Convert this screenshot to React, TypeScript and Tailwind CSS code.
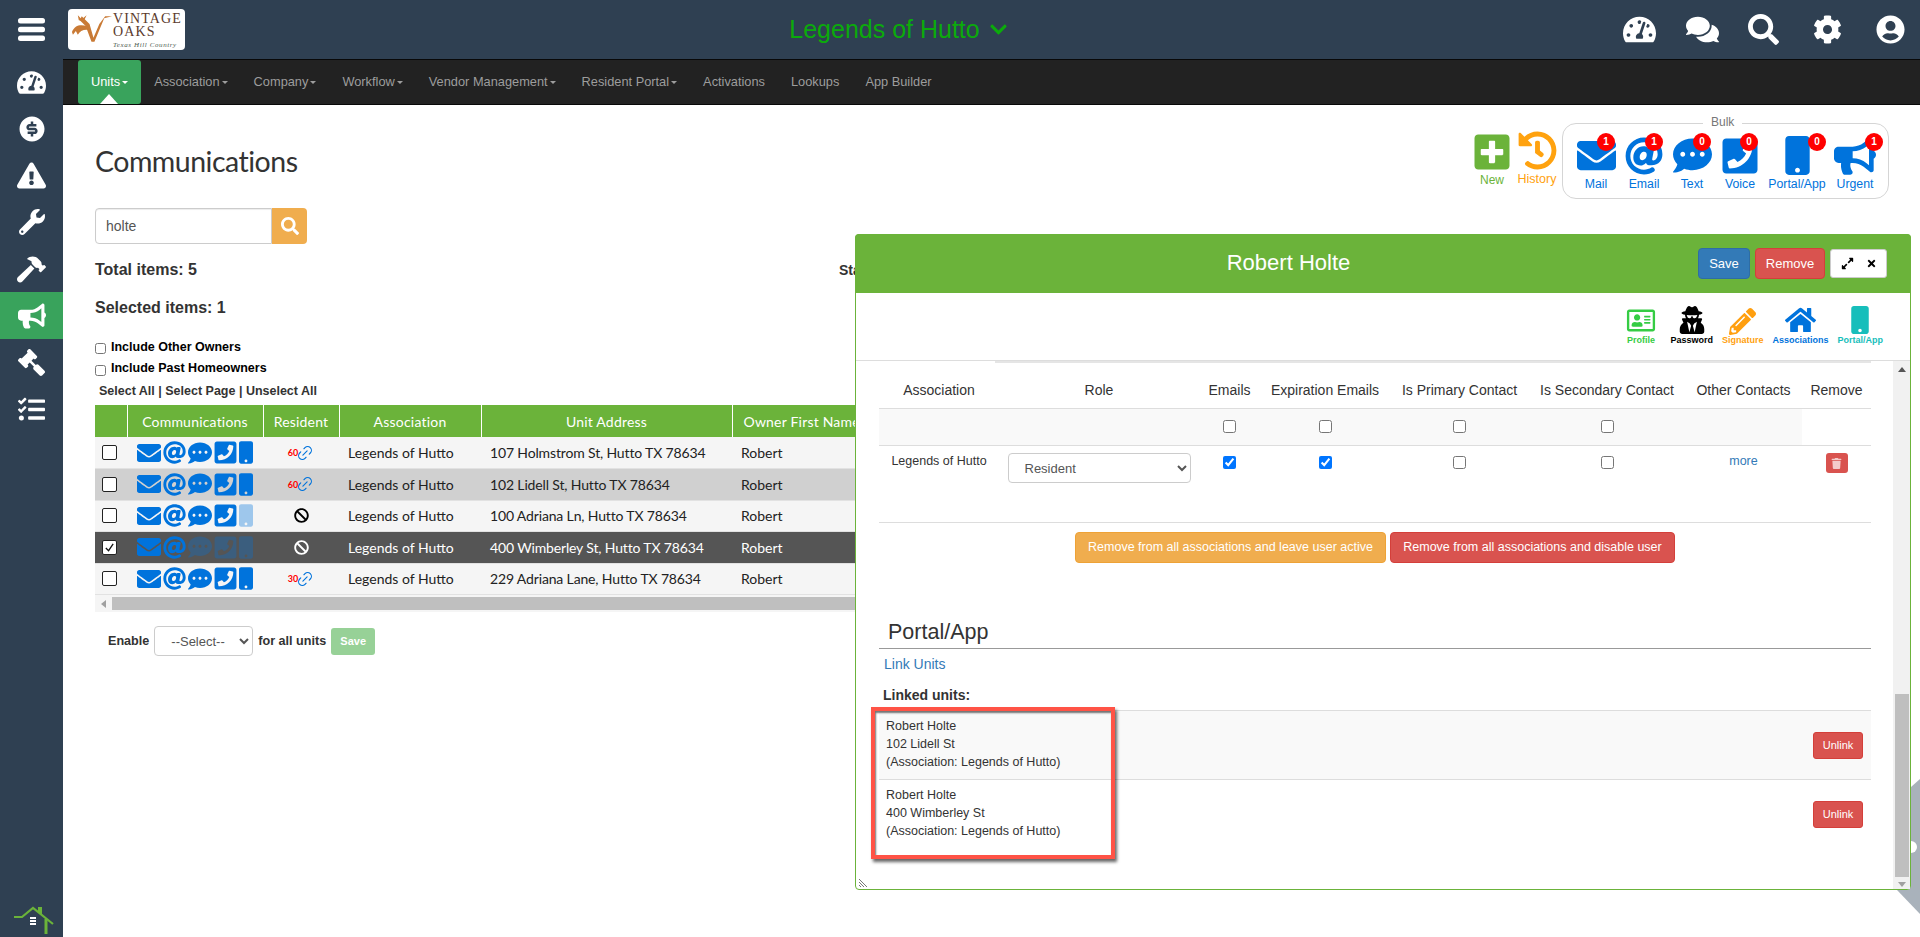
import React from "react";
import {
  FaAt,
  FaBan,
  FaBullhorn,
  FaChevronDown,
  FaCog,
  FaCommentDots,
  FaComments,
  FaEnvelope,
  FaExclamationTriangle,
  FaExpandAlt,
  FaGavel,
  FaHammer,
  FaHistory,
  FaHome,
  FaMobile,
  FaPencilAlt,
  FaPhoneSquare,
  FaPlusSquare,
  FaRegAddressCard,
  FaSearch,
  FaTachometerAlt,
  FaTasks,
  FaTimes,
  FaTrash,
  FaUserCircle,
  FaUserSecret,
  FaWrench,
} from "react-icons/fa";
import { RiMoneyDollarCircleFill } from "react-icons/ri";
import { Link2 } from "lucide-react";

const navItems = [
  { label: "Units", caret: true, active: true },
  { label: "Association", caret: true },
  { label: "Company", caret: true },
  { label: "Workflow", caret: true },
  { label: "Vendor Management", caret: true },
  { label: "Resident Portal", caret: true },
  { label: "Activations" },
  { label: "Lookups" },
  { label: "App Builder" },
];

const bulkItems = [
  { label: "Mail", count: 1, icon: <FaEnvelope size={39} />, box: "w-[48px]", badge: "left-[25px]" },
  { label: "Email", count: 1, icon: <FaAt size={38} />, box: "w-[48px]", badge: "left-[25px]" },
  { label: "Text", count: 0, icon: <FaCommentDots size={39} />, box: "w-[48px]", badge: "left-[25px]" },
  { label: "Voice", count: 0, icon: <FaPhoneSquare size={40} />, box: "w-[48px]", badge: "left-[24px]" },
  { label: "Portal/App", count: 0, icon: <FaMobile size={39} />, box: "w-[66px]", badge: "left-[44px]" },
  { label: "Urgent", count: 1, icon: <FaBullhorn size={42} />, box: "w-[50px]", badge: "left-[35px]" },
];

const rows = [
  { address: "107 Holmstrom St, Hutto TX 78634", resident: "60", tone: "light" },
  { address: "102 Lidell St, Hutto TX 78634", resident: "60", tone: "gray" },
  { address: "100 Adriana Ln, Hutto TX 78634", resident: "", tone: "light", mobile: "faded" },
  { address: "400 Wimberley St, Hutto TX 78634", resident: "", tone: "dark", checked: true },
  { address: "229 Adriana Lane, Hutto TX 78634", resident: "30", tone: "light" },
];

const linkedUnits = [
  { name: "Robert Holte", street: "102 Lidell St", shaded: true },
  { name: "Robert Holte", street: "400 Wimberley St", shaded: false },
];

const roleCols = [
  { label: "Association", width: "w-[120px]" },
  { label: "Role", width: "w-[200px]" },
  { label: "Emails", width: "w-[61px]" },
  { label: "Expiration Emails", width: "w-[130px]" },
  { label: "Is Primary Contact", width: "w-[139px]" },
  { label: "Is Secondary Contact", width: "w-[156px]" },
  { label: "Other Contacts", width: "w-[117px]" },
  { label: "Remove", width: "w-[69px]" },
];

function Logo() {
  return (
    <div className="flex h-[41px] w-[117px] overflow-hidden rounded-[4px] bg-white pl-[2px]">
      <svg viewBox="0 0 44 30" className="mt-[3px] h-[30px] w-[43px] shrink-0">
        <path d="M12 4 L20 12 L24 26 L30 12 L36 4 L43 4 L35 6 L25 30 L22 30 L16 14 L10 8 Z" fill="#c97a35" />
        <path d="M2 20 C5 13 10 12 18 14 L20 18 C14 17 10 19 8 23 L6 19 L3 23 Z" fill="#c97a35" />
        <path d="M8 3 L12 7 L17 3 L14 9 L9 8 Z" fill="#c97a35" />
      </svg>
      <div className="flex flex-col font-['Liberation_Serif',serif] text-[#5b3a2c]">
        <span className="mt-[3px] text-[14px] leading-[14px] tracking-[1.1px]">VINTAGE</span>
        <span className="text-[14px] leading-[12px] tracking-[1.1px]">OAKS</span>
        <span className="mt-[3px] text-[7px] leading-[9px] italic tracking-[0.6px] text-[#4d5b50]">Texas Hill Country</span>
      </div>
    </div>
  );
}

function RowCheck({ checked }: { checked?: boolean }) {
  return (
    <div className="ml-[7px] flex h-[15px] w-[15px] items-center justify-center rounded-[2px] border border-[#222] bg-white">
      {checked && (
        <svg viewBox="0 0 12 12" className="h-[11px] w-[11px]">
          <path d="M2 6.5 L5 9.5 L10 2" fill="none" stroke="#111" strokeWidth="1.4" />
        </svg>
      )}
    </div>
  );
}

export default function App() {
  return (
    <div className="relative flex h-screen flex-col overflow-hidden bg-white font-['Liberation_Sans',Arial,sans-serif] text-[#333]">
      {/* top bar */}
      <header className="flex h-[59px] shrink-0 items-center bg-[#2f4052]">
        <div className="flex w-[63px] justify-center">
          <svg viewBox="0 0 27 23" className="h-[23px] w-[27px]" fill="#fff">
            <rect width="27" height="5.5" rx="2.5" />
            <rect y="8.7" width="27" height="5.5" rx="2.5" />
            <rect y="17.5" width="27" height="5.5" rx="2.5" />
          </svg>
        </div>
        <div className="ml-[5px] w-[122px]">
          <Logo />
        </div>
        <div className="flex flex-1 items-center justify-center gap-[9px] pr-[16px] text-[25px] text-[#0bab0b]">
          Legends of Hutto
          <FaChevronDown size={19} />
        </div>
        <div className="flex w-[297px] items-center text-white">
          <FaTachometerAlt size={33} className="mr-[30px]" />
          <FaComments size={33} className="mr-[29px]" />
          <FaSearch size={31} className="mr-[34px]" />
          <FaCog size={29} className="mr-[34px]" />
          <FaUserCircle size={29} />
        </div>
      </header>

      <div className="flex min-h-0 flex-1">
        {/* sidebar */}
        <aside className="relative w-[63px] shrink-0 bg-[#2f4052] text-white">
          {[
            <FaTachometerAlt size={29} />,
            <RiMoneyDollarCircleFill size={30} />,
            <FaExclamationTriangle size={29} />,
            <FaWrench size={26} />,
            <FaHammer size={29} />,
            <FaBullhorn size={28} />,
            <FaGavel size={27} className="-scale-x-100" />,
            <FaTasks size={27} />,
          ].map((icon, i) => (
            <div key={i} className={`flex h-[46.7px] items-center justify-center ${i === 5 ? "bg-[#39a35c]" : ""}`}>
              {icon}
            </div>
          ))}
          <svg viewBox="0 0 42 28" className="absolute bottom-[3px] left-[13px] h-[28px] w-[42px]">
            <path d="M1 11 H9 L20 2 L40 18" fill="none" stroke="#6bb33a" strokeWidth="2.2" />
            <path d="M25 1 H29 V9 L25 6 Z" fill="#6bb33a" />
            <path d="M33 13 V28" stroke="#6bb33a" strokeWidth="3" />
            <rect x="17" y="11" width="6" height="2" fill="#fff" />
            <rect x="17" y="14" width="6" height="2" fill="#fff" />
            <rect x="17" y="17" width="6" height="2" fill="#fff" />
          </svg>
        </aside>

        <div className="min-w-0 flex-1">
          {/* menu */}
          <nav className="flex h-[46px] items-stretch border-y border-[#080808] bg-[#222] pl-[15px] text-[12.8px] text-[#9d9d9d]">
            {navItems.map((item) => (
              <div
                key={item.label}
                className={`relative flex items-center px-[13px] ${item.active ? "rounded-[3px] bg-[#39a35c] text-white" : ""}`}
              >
                {item.label}
                {item.caret && (
                  <span className="ml-[2px] mt-[1px] h-0 w-0 border-x-[3px] border-t-[3px] border-x-transparent border-t-current" />
                )}
                {item.active && (
                  <span className="absolute bottom-0 left-[22px] h-0 w-0 border-x-[9px] border-b-[10px] border-x-transparent border-b-white" />
                )}
              </div>
            ))}
          </nav>

          <main className="relative pl-[32px]">
            {/* title row with new, history and bulk actions */}
            <div className="flex items-center justify-between pr-[31px] pt-[18px]">
              <h1 className="font-['Lato',sans-serif] text-[28.5px] leading-[40px] tracking-[-0.5px] text-[#333]">Communications</h1>
              <div className="flex items-start">
                <div className="mt-[9px] flex w-[46px] flex-col items-center text-[12px] leading-[14px] text-[#6bb33a]">
                  <FaPlusSquare size={40} />
                  <span className="mt-[1px]">New</span>
                </div>
                <div className="mt-[8px] flex w-[44px] flex-col items-center text-[12.5px] leading-[14px] text-[#ffa20f]">
                  <FaHistory size={39} />
                  <span className="mt-[2px]">History</span>
                </div>
                <div className="relative ml-[3px] flex h-[76px] w-[327px] items-start rounded-[14px] border border-[#d5d5d5] pl-[9px] pt-[12px]">
                  <span className="absolute left-[140px] top-[-9px] bg-white px-[8px] text-[12px] leading-[14px] text-[#777]">Bulk</span>
                  {bulkItems.map((b) => (
                    <div key={b.label} className={`relative flex ${b.box} flex-col items-center text-[12.3px] leading-[14px] text-[#0073dc]`}>
                      <div className="flex h-[39px] items-center">{b.icon}</div>
                      <span className="mt-[2px] whitespace-nowrap">{b.label}</span>
                      <span className={`absolute ${b.badge} top-[-3px] flex h-[18px] w-[18px] items-center justify-center rounded-full bg-[#ff0000] text-[10px] font-bold text-white`}>
                        {b.count}
                      </span>
                    </div>
                  ))}
                </div>
              </div>
            </div>

            {/* search */}
            <div className="mt-[9px] flex h-[36px] w-[212px]">
              <input
                defaultValue="holte"
                className="h-full w-[177px] rounded-l-[4px] border border-[#ccc] px-[10px] text-[14px] text-[#555] shadow-[inset_0_1px_1px_rgba(0,0,0,0.075)]"
              />
              <button className="flex w-[35px] items-center justify-center rounded-r-[4px] bg-[#f0ad4e] text-white">
                <FaSearch size={18} />
              </button>
            </div>

            <div className="mt-[16px] flex h-[20px] text-[16px] font-bold leading-[20px]">
              <div className="w-[744px]">Total items: 5</div>
              <div className="text-[14px]">Status</div>
            </div>
            <div className="mt-[18px] text-[16px] font-bold leading-[20px]">Selected items: 1</div>

            <label className="mt-[18px] flex h-[22px] items-center gap-[5px] text-[12.5px] font-bold text-black">
              <input type="checkbox" className="mt-[3px] h-[11px] w-[11px]" />
              Include Other Owners
            </label>
            <label className="flex h-[21px] items-center gap-[5px] text-[12.5px] font-bold text-black">
              <input type="checkbox" className="mt-[3px] h-[11px] w-[11px]" />
              Include Past Homeowners
            </label>
            <div className="mt-[2px] pl-[4px] text-[12.5px] font-bold leading-[20px]">
              Select All | Select Page | Unselect All
            </div>

            {/* units table */}
            <div className="mt-[4px] w-[790px] overflow-hidden">
              <table className="w-[790px] table-fixed border-collapse font-['Lato',sans-serif] text-[14px]">
                <colgroup>
                  <col className="w-[32px]" />
                  <col className="w-[136px]" />
                  <col className="w-[76px]" />
                  <col className="w-[142px]" />
                  <col className="w-[251px]" />
                  <col />
                </colgroup>
                <thead>
                  <tr className="h-[32px] bg-[#6bb33a] text-white">
                    {["", "Communications", "Resident", "Association", "Unit Address"].map((h, i) => (
                      <th key={i} className="whitespace-nowrap border-r border-white text-center text-[14px] font-normal tracking-[0.2px]">
                        {h}
                      </th>
                    ))}
                    <th className="whitespace-nowrap pl-[11px] text-left text-[14px] font-normal tracking-[0.2px]">Owner First Name</th>
                  </tr>
                </thead>
                <tbody>
                  {rows.map((r) => {
                    const isDark = r.tone === "dark";
                    const dim = isDark ? "opacity-30" : "";
                    return (
                      <tr
                        key={r.address}
                        className={`h-[31.5px] border-b border-[#e2e2e2] ${
                          isDark ? "bg-[#555] text-white" : r.tone === "gray" ? "bg-[#d0d0d0] text-[#222]" : "bg-[#f5f5f5] text-[#222]"
                        }`}
                      >
                        <td>
                          <RowCheck checked={r.checked} />
                        </td>
                        <td>
                          <div className="flex items-center gap-[2px] pl-[10px] text-[#0073dc]">
                            <FaEnvelope size={24} />
                            <FaAt size={23} />
                            <FaCommentDots size={24} className={dim} />
                            <FaPhoneSquare size={25} className={`-mx-[1px] ${dim}`} />
                            <FaMobile className={`h-[23px] w-[14px] ${dim} ${r.mobile === "faded" ? "opacity-35" : ""}`} />
                          </div>
                        </td>
                        <td>
                          <div className="flex items-center justify-center">
                            {r.resident ? (
                              <>
                                <span className="text-[9px] font-bold text-[#ff0000]">{r.resident}</span>
                                <Link2 size={18} strokeWidth={1.5} className="-ml-[2px] -rotate-45 text-[#0073dc]" />
                              </>
                            ) : (
                              <FaBan size={15} className={isDark ? "text-white" : "text-black"} />
                            )}
                          </div>
                        </td>
                        <td className="pl-[9px] whitespace-nowrap">Legends of Hutto</td>
                        <td className="pl-[9px] whitespace-nowrap tracking-[-0.15px]">{r.address}</td>
                        <td className="pl-[9px]">Robert</td>
                      </tr>
                    );
                  })}
                </tbody>
              </table>
              <div className="flex h-[17px] items-center bg-[#f5f5f5]">
                <span className="ml-[6px] h-0 w-0 border-y-[4px] border-r-[5px] border-y-transparent border-r-[#a0a0a0]" />
                <div className="ml-[6px] h-[13px] flex-1 bg-[#bfbfbf]" />
              </div>
            </div>

            <div className="mt-[14px] flex h-[30px] items-center pl-[13px] text-[12.6px] font-bold">
              Enable
              <select className="mx-[5px] h-[30px] w-[99px] rounded-[4px] border border-[#ccc] bg-white pl-[12px] text-[13px] font-normal text-[#555]">
                <option>--Select--</option>
              </select>
              for all units
              <button className="ml-[5px] h-[27px] w-[44px] rounded-[3px] bg-[#97d197] text-[11px] font-bold text-white">Save</button>
            </div>
          </main>
        </div>
      </div>

      {/* floating widget behind the dialog */}
      <svg viewBox="0 0 23 135" className="absolute left-[1897px] top-[779px] h-[135px] w-[23px]">
        <path d="M0 111 L14 8 L23 0 V135 Z" fill="#a9b2bb" />
        <circle cx="14" cy="68" r="6" fill="#fff" />
      </svg>

      {/* contact dialog */}
      <section className="absolute left-[855px] top-[234px] flex h-[656px] w-[1056px] flex-col rounded-[4px] border border-[#6bb33a] bg-white">
        <div className="-mx-px -mt-px flex h-[59px] shrink-0 items-center rounded-t-[4px] bg-[#6bb33a] pr-[24px]">
          <div className="flex-1 pb-[2px] pl-[24px] text-center text-[22px] text-white">Robert Holte</div>
          <button className="h-[31px] w-[52px] rounded-[4px] border border-[#2e6da4] bg-[#337ab7] text-[13px] text-white">Save</button>
          <button className="ml-[5px] h-[31px] w-[70px] rounded-[4px] border border-[#d43f3a] bg-[#d9534f] text-[13px] text-white">Remove</button>
          <div className="ml-[5px] flex h-[29px] w-[57px] items-center justify-center gap-[12px] rounded-[3px] border border-[#ccc] bg-white text-black">
            <FaExpandAlt size={13} />
            <FaTimes size={11} />
          </div>
        </div>

        <div className="flex h-[68px] shrink-0 items-start justify-end border-b border-[#ddd] pr-[27px] pt-[13px] text-[9px] font-bold leading-[12px]">
          <div className="mr-[15px] flex w-[29px] flex-col items-center text-[#35cc44]">
            <FaRegAddressCard size={30} className="mt-[2px] h-[25px]" />
            <span className="mt-[1px]">Profile</span>
          </div>
          <div className="mr-[9px] flex flex-col items-center text-black">
            <FaUserSecret size={28} />
            <span>Password</span>
          </div>
          <div className="mr-[9px] flex flex-col items-center text-[#ff9f0f]">
            <FaPencilAlt size={27} className="mt-[2px] mb-[-1px]" />
            <span>Signature</span>
          </div>
          <div className="mr-[9px] flex flex-col items-center text-[#0073dc]">
            <FaHome size={31} className="h-[28px]" />
            <span>Associations</span>
          </div>
          <div className="flex flex-col items-center text-[#17bebb]">
            <FaMobile size={28} />
            <span>Portal/App</span>
          </div>
        </div>

        <div className="flex min-h-0 flex-1">
          <div className="min-w-0 flex-1 pl-[23px] pr-[22px] text-[12.5px]">
            <div className="ml-[116px] h-[2px] bg-[#e5e5e5]" />

            <div className="flex h-[46px] items-center border-b border-[#ddd] pt-[10px] text-[14px]">
              {roleCols.map((c) => (
                <div key={c.label} className={`${c.width} whitespace-nowrap text-center`}>
                  {c.label}
                </div>
              ))}
            </div>

            <div className="flex h-[37px] items-center border-b border-[#ddd]">
              <div className="flex h-full w-[923px] items-center bg-[#f9f9f9] pb-[2px] pl-[320px]">
                <div className="flex w-[61px] justify-center"><input type="checkbox" className="h-[13px] w-[13px]" /></div>
                <div className="flex w-[130px] justify-center"><input type="checkbox" className="h-[13px] w-[13px]" /></div>
                <div className="flex w-[139px] justify-center"><input type="checkbox" className="h-[13px] w-[13px]" /></div>
                <div className="flex w-[156px] justify-center"><input type="checkbox" className="h-[13px] w-[13px]" /></div>
              </div>
            </div>

            <div className="flex h-[77px] items-start border-b border-[#ddd] pt-[7px]">
              <div className="w-[120px] text-center leading-[16px]">Legends of Hutto</div>
              <div className="flex w-[200px] justify-center">
                <select defaultValue="Resident" className="h-[30px] w-[183px] rounded-[4px] border border-[#ccc] bg-white pl-[12px] text-[13px] text-[#555]">
                  <option>Resident</option>
                </select>
              </div>
              <div className="flex w-[61px] justify-center pt-[3px]"><input type="checkbox" defaultChecked className="h-[13px] w-[13px]" /></div>
              <div className="flex w-[130px] justify-center pt-[3px]"><input type="checkbox" defaultChecked className="h-[13px] w-[13px]" /></div>
              <div className="flex w-[139px] justify-center pt-[3px]"><input type="checkbox" className="h-[13px] w-[13px]" /></div>
              <div className="flex w-[156px] justify-center pt-[3px]"><input type="checkbox" className="h-[13px] w-[13px]" /></div>
              <div className="w-[117px] text-center leading-[16px] text-[#337ab7]">more</div>
              <div className="flex w-[69px] justify-center">
                <div className="flex h-[20px] w-[22px] items-center justify-center rounded-[3px] bg-[#d9534f] text-white/70">
                  <FaTrash size={11} />
                </div>
              </div>
            </div>

            <div className="mt-[9px] flex justify-center gap-[4px] text-[12.5px] text-white">
              <button className="h-[31px] w-[311px] rounded-[4px] border border-[#eea236] bg-[#f0ad4e]">Remove from all associations and leave user active</button>
              <button className="h-[31px] w-[285px] rounded-[4px] border border-[#d43f3a] bg-[#d9534f]">Remove from all associations and disable user</button>
            </div>

            <h3 className="mt-[54px] border-b border-[#999] pb-px pl-[9px] text-[21.5px] leading-[30px]">Portal/App</h3>
            <a className="mt-[5px] block pl-[5px] text-[14px] leading-[20px] text-[#337ab7]">Link Units</a>
            <div className="mt-[11px] pl-[4px] text-[14px] font-bold leading-[20px]">Linked units:</div>

            <div className="relative mt-[5px]">
              {linkedUnits.map((u) => (
                <div
                  key={u.street}
                  className={`flex h-[69px] items-center justify-between border-t border-[#ddd] pl-[7px] pr-[8px] leading-[18px] ${u.shaded ? "bg-[#f9f9f9]" : ""}`}
                >
                  <div className="pb-[2px]">
                    <div>{u.name}</div>
                    <div>{u.street}</div>
                    <div>(Association: Legends of Hutto)</div>
                  </div>
                  <button className="h-[27px] w-[50px] rounded-[3px] border border-[#d43f3a] bg-[#d9534f] text-[11px] text-white">Unlink</button>
                </div>
              ))}
              {/* red annotation drawn over the linked units */}
              <div className="absolute left-[-8px] top-[-3px] h-[152px] w-[244px] border-4 border-[#ff5346] shadow-[2px_3px_3px_rgba(0,0,0,0.6),inset_1px_2px_2px_rgba(0,0,0,0.55)]" />
            </div>
          </div>

          {/* dialog scrollbar */}
          <div className="flex w-[17px] shrink-0 flex-col items-center bg-[#f1f1f1] pb-[2px] pt-[6px]">
            <span className="h-0 w-0 border-x-[4px] border-b-[5px] border-x-transparent border-b-[#555]" />
            <div className="mt-[322px] w-[14px] flex-1 bg-[#bfbfbf]" />
            <span className="mt-[5px] h-0 w-0 border-x-[4px] border-t-[5px] border-x-transparent border-t-[#a0a0a0]" />
          </div>
        </div>

        {/* resize handle */}
        <svg viewBox="0 0 10 10" className="absolute bottom-[1px] left-[2px] h-[10px] w-[10px]" stroke="#555" strokeWidth="0.8">
          <path d="M1 1 L9 9 M1 4 L6 9 M1 7 L3 9" />
        </svg>
      </section>
    </div>
  );
}
